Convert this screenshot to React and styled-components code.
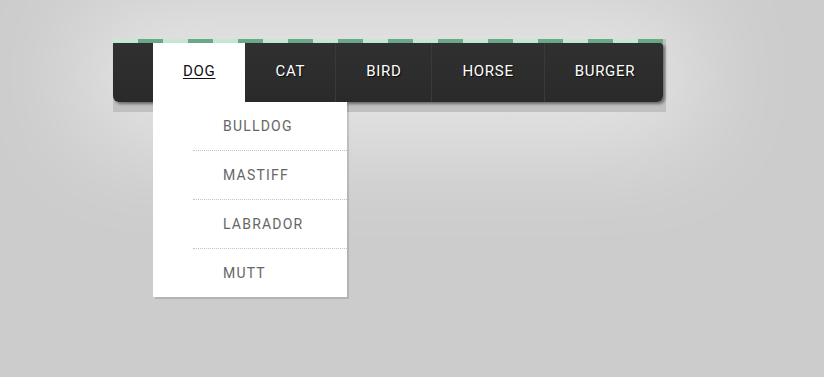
import React from 'react';
import styled, { createGlobalStyle } from 'styled-components';

const GlobalStyle = createGlobalStyle`
  html, body {
    margin: 0;
    padding: 0;
    background: #cccccc;
    font-family: Roboto, 'Liberation Sans', Arial, sans-serif;
  }
  ul {
    margin: 0;
    padding: 0;
    list-style: none;
  }
`;

const Page = styled.div`
  min-height: 377px;
  padding: 39px 0 0 113px;
  box-sizing: border-box;
`;

const NavWrap = styled.nav`
  width: 553px;
  padding-bottom: 10px;
  background: rgba(0, 0, 0, 0.06);
  box-shadow: 0 0 110px 30px rgba(255, 255, 255, 0.55);
`;

const Stripe = styled.div`
  width: 550px;
  height: 4px;
  background: repeating-linear-gradient(
    90deg,
    #c6e7d5 0 25px,
    #68a986 25px 50px
  );
`;

const Bar = styled.ul`
  display: flex;
  width: 550px;
  height: 59px;
  padding-left: 40px;
  box-sizing: border-box;
  background: linear-gradient(#303030, #2a2a2a);
  border-radius: 0 3px 6px 6px;
  box-shadow: 2px 2px 3px rgba(0, 0, 0, 0.45);
`;

const Item = styled.li`
  position: relative;
  display: flex;
  align-items: center;
  padding: 0 30px 3px;
  border-right: ${p => (p.$last || p.$active ? 'none' : '1px solid #3a3a3a')};
  background: ${p => (p.$active ? '#fff' : 'transparent')};
  flex: ${p => (p.$last ? 1 : 'none')};
`;

const Link = styled.a`
  font-size: 15px;
  letter-spacing: 0.7px;
  color: ${p => (p.$active ? '#111' : '#fff')};
  text-decoration: ${p => (p.$active ? 'underline' : 'none')};
  text-underline-offset: 2px;
  text-shadow: ${p => (p.$active ? 'none' : '1px 1px 1px rgba(0,0,0,0.8)')};
  cursor: pointer;
`;

const Dropdown = styled.ul`
  position: absolute;
  top: 100%;
  left: 0;
  width: 194px;
  background: #fff;
  box-shadow: 2px 2px 0 rgba(0, 0, 0, 0.12);
  z-index: 2;
`;

const SubItem = styled.li`
  margin-left: 40px;
  padding-left: 30px;
  line-height: 48px;
  border-bottom: ${p => (p.$last ? 'none' : '1px dotted #c4c4c4')};
`;

const SubLink = styled.a`
  font-size: 14px;
  letter-spacing: 1.2px;
  color: #666;
  text-decoration: none;
`;

const menu = ['DOG', 'CAT', 'BIRD', 'HORSE', 'BURGER'];
const dogs = ['BULLDOG', 'MASTIFF', 'LABRADOR', 'MUTT'];

export default function App() {
  return (
    <>
      <GlobalStyle />
      <Page>
        <NavWrap>
          <Stripe />
          <Bar>
            {menu.map((label, i) => {
              const active = i === 0;
              return (
                <Item key={label} $active={active} $last={i === menu.length - 1}>
                  <Link $active={active}>{label}</Link>
                  {active && (
                    <Dropdown>
                      {dogs.map((dog, j) => (
                        <SubItem key={dog} $last={j === dogs.length - 1}>
                          <SubLink>{dog}</SubLink>
                        </SubItem>
                      ))}
                    </Dropdown>
                  )}
                </Item>
              );
            })}
          </Bar>
        </NavWrap>
      </Page>
    </>
  );
}
